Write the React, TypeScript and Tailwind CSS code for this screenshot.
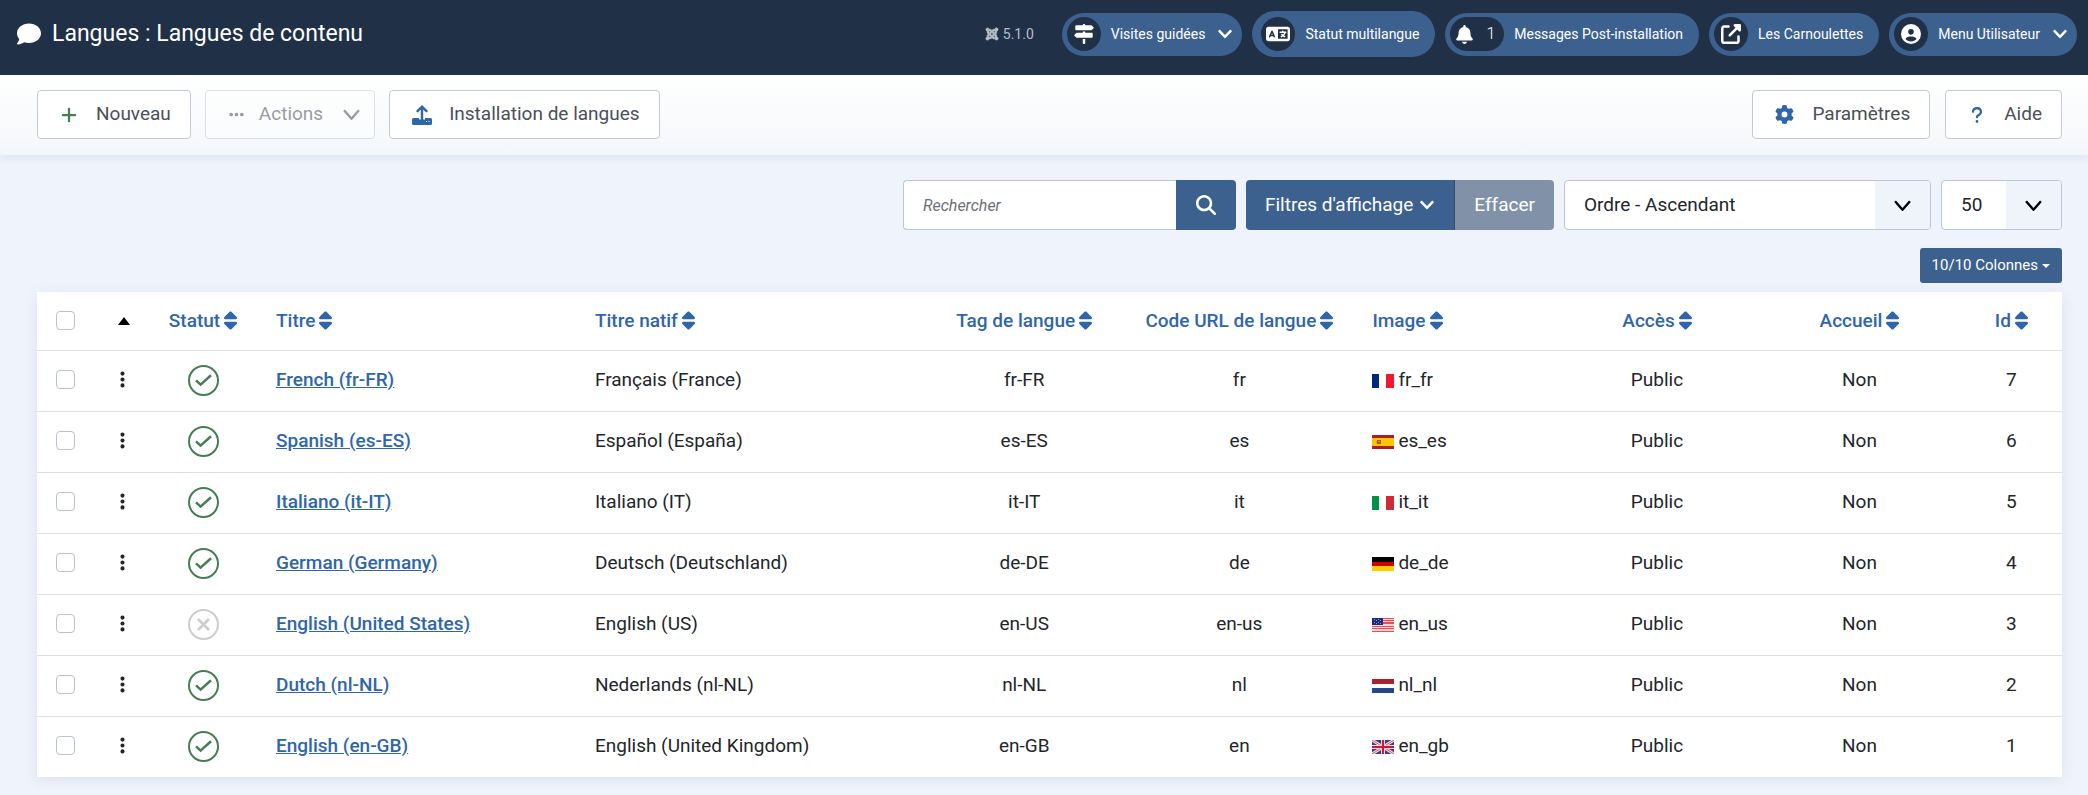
import { ReactNode } from "react";
import { FaChevronDown } from "react-icons/fa";
import {
  FaBell,
  FaCircleUser,
  FaComment,
  FaEllipsis,
  FaEllipsisVertical,
  FaGear,
  FaJoomla,
  FaLanguage,
  FaMagnifyingGlass,
  FaPlus,
  FaQuestion,
  FaSignsPost,
  FaSort,
  FaUpRightFromSquare,
} from "react-icons/fa6";

type Language = {
  id: number;
  title: string;
  native: string;
  tag: string;
  sef: string;
  image: string;
  published: boolean;
};

const languages: Language[] = [
  { id: 7, title: "French (fr-FR)", native: "Français (France)", tag: "fr-FR", sef: "fr", image: "fr_fr", published: true },
  { id: 6, title: "Spanish (es-ES)", native: "Español (España)", tag: "es-ES", sef: "es", image: "es_es", published: true },
  { id: 5, title: "Italiano (it-IT)", native: "Italiano (IT)", tag: "it-IT", sef: "it", image: "it_it", published: true },
  { id: 4, title: "German (Germany)", native: "Deutsch (Deutschland)", tag: "de-DE", sef: "de", image: "de_de", published: true },
  { id: 3, title: "English (United States)", native: "English (US)", tag: "en-US", sef: "en-us", image: "en_us", published: false },
  { id: 2, title: "Dutch (nl-NL)", native: "Nederlands (nl-NL)", tag: "nl-NL", sef: "nl", image: "nl_nl", published: true },
  { id: 1, title: "English (en-GB)", native: "English (United Kingdom)", tag: "en-GB", sef: "en", image: "en_gb", published: true },
];

const flagShapes: Record<string, ReactNode> = {
  fr_fr: (
    <>
      <path fill="#00267f" d="M0 0h7v14H0z" />
      <path fill="#fff" d="M7 0h8v14H7z" />
      <path fill="#f31830" d="M14 0h8v14h-8z" />
    </>
  ),
  es_es: (
    <>
      <path fill="#b01c20" d="M0 0h22v14H0z" />
      <path fill="#ffc400" d="M0 3h22v8H0z" />
      <path fill="#ad5a1e" d="M5 5h4v4H5z" />
      <path fill="#d99a3a" d="M6 6h2v1H6zM4 6h1v2H4z" />
    </>
  ),
  it_it: (
    <>
      <path fill="#fff" d="M0 0h22v14H0z" />
      <path fill="#009246" d="M0 0h7v14H0z" />
      <path fill="#ce2b37" d="M14 0h8v14h-8z" />
    </>
  ),
  de_de: (
    <>
      <path fill="#000" d="M0 0h22v5H0z" />
      <path fill="#d00000" d="M0 5h22v4H0z" />
      <path fill="#ffce00" d="M0 9h22v5H0z" />
    </>
  ),
  en_us: (
    <>
      <path fill="#fbd5d5" d="M0 0h22v14H0z" />
      <path fill="#e8504f" d="M0 0h22v1H0zM0 2h22v1H0zM0 4h22v2H0zM0 8h22v1H0zM0 10h22v1H0zM0 13h22v1H0z" />
      <path fill="#1c2a80" d="M0 0h11v7H0z" />
      <path fill="#8f97c6" d="M2 1h1v1H2zM4 2h1v1H4zM6 1h1v1H6zM8 2h1v1H8zM2 4h1v1H2zM4 5h1v1H4zM6 4h1v1H6zM8 5h1v1H8z" />
    </>
  ),
  nl_nl: (
    <>
      <path fill="#fff" d="M0 0h22v14H0z" />
      <path fill="#a8232f" d="M0 0h22v5H0z" />
      <path fill="#27478c" d="M0 9h22v5H0z" />
    </>
  ),
  en_gb: (
    <>
      <path fill="#35417f" d="M0 0h22v14H0z" />
      <path stroke="#f2dbe2" strokeWidth="3" d="M0 0l22 14M22 0L0 14" />
      <path stroke="#d85a70" strokeWidth="1" d="M0 0l22 14M22 0L0 14" />
      <path fill="#f3d3db" d="M9 0h4v14H9zM0 5h22v4H0z" />
      <path fill="#cc1a35" d="M10 0h2v14h-2zM0 6h22v2H0z" />
    </>
  ),
};

function Flag({ code }: { code: string }) {
  return (
    <svg viewBox="0 0 22 14" className="mt-[2px] h-[14px] w-[22px] shrink-0" aria-hidden="true">
      {flagShapes[code]}
    </svg>
  );
}

function StatusIcon({ published }: { published: boolean }) {
  return published ? (
    <svg viewBox="0 0 31 31" className="size-[31px] text-[#457d54]" fill="none" stroke="currentColor">
      <circle cx="15.5" cy="15.5" r="14.5" strokeWidth="2" />
      <path d="M8 15.3l4.600 4.300L23 10.200" strokeWidth="2.500" />
    </svg>
  ) : (
    <svg viewBox="0 0 31 31" className="size-[31px] text-[#cdcdcd]" fill="none" stroke="currentColor">
      <circle cx="15.5" cy="15.5" r="14.5" strokeWidth="2" />
      <path d="M10 10l11 11M21 10L10 21" strokeWidth="2.800" />
    </svg>
  );
}

function ThinChevron({ className }: { className: string }) {
  return (
    <svg viewBox="0 0 16 10" className={className} fill="none" stroke="currentColor" strokeWidth="2.2" aria-hidden="true">
      <path d="M1 1l7 8 7-8" />
    </svg>
  );
}

function UploadIcon() {
  return (
    <svg viewBox="0 0 20 20" className="size-5 text-[#2f66ab]" aria-hidden="true">
      <path fill="currentColor" d="M1.500 13H7v1.500h6V13h5.500q1.500 0 1.500 1.500v4q0 1.500-1.500 1.500h-17Q0 20 0 18.500v-4Q0 13 1.500 13z" />
      <path fill="none" stroke="currentColor" strokeWidth="2.400" strokeLinecap="round" d="M10 15.500V2M5.500 6.200L10 1.700l4.500 4.500" />
      <path fill="#fff" d="M14 16h1v1h-1zM16.500 16h1v1h-1z" />
    </svg>
  );
}

type PillProps = { icon: ReactNode; label: string; caret?: boolean; tall?: boolean; count?: string };

function Pill({ icon, label, caret = false, tall = false, count }: PillProps) {
  const size = tall ? "h-[46px] pl-[9px] pr-4" : caret ? "h-[43px] pl-[5px] pr-[9px]" : "h-[43px] pl-[5px] pr-4";
  return (
    <button type="button" className={`flex items-center rounded-full bg-[#3d618f] text-sm text-white ${size}`}>
      <span className="flex h-[34px] min-w-[34px] items-center justify-center gap-2 rounded-full bg-[#203047] px-[5px]">
        {icon}
        {count && <span className="pr-1 pl-1 text-base font-light">{count}</span>}
      </span>
      <span className="ml-[10px]">{label}</span>
      {caret && <FaChevronDown className="ml-3 size-4" />}
    </button>
  );
}

const toolButton = "flex h-[49px] items-center rounded-[4px] border border-[#c3cad3] bg-white text-[19px] text-[#495057]";

function SortHeader({ label }: { label: string }) {
  return (
    <a href="#" className="inline-flex items-center gap-1 text-[#2f66ab]">
      {label}
      <FaSort className="h-[21px] w-[13px]" />
    </a>
  );
}

function Box({ label }: { label: string }) {
  return (
    <input
      type="checkbox"
      aria-label={label}
      className="block size-[19px] appearance-none rounded-[4px] border border-[#b9c2ce] bg-white checked:bg-[#3d618f]"
    />
  );
}

function SelectBox({ label, value, className }: { label: string; value: string; className: string }) {
  return (
    <div className={`relative ${className}`}>
      <select
        aria-label={label}
        defaultValue={value}
        className="h-[50px] w-full appearance-none rounded-[4px] border border-[#b9c5d8] bg-white pl-[19px] text-[19px] text-[#22262a]"
      >
        <option>{value}</option>
      </select>
      <span className="pointer-events-none absolute inset-y-px right-px flex w-[55px] items-center justify-center rounded-r-[3px] bg-[#eff4fb]">
        <ThinChevron className="h-[11px] w-[17px] text-black" />
      </span>
    </div>
  );
}

export default function App() {
  return (
    <div className="min-h-screen bg-[#eff3fb] font-['Roboto',sans-serif] text-[#22262a]">
      <header className="flex h-[75px] items-center justify-between bg-[#203047] pr-[11px] pb-[7px] pl-[17px] text-white">
        <h1 className="flex items-center gap-[11px] text-[23px]">
          <FaComment className="size-6" />
          Langues : Langues de contenu
        </h1>
        <div className="flex items-center gap-[10px]">
          <span className="mr-[18px] flex items-center gap-1 text-sm text-[#b5bdc9]">
            <FaJoomla className="size-[14px]" stroke="currentColor" strokeWidth="24" />
            5.1.0
          </span>
          <Pill icon={<FaSignsPost className="size-5" />} label="Visites guidées" caret />
          <Pill icon={<FaLanguage className="size-6" />} label="Statut multilangue" tall />
          <Pill icon={<FaBell className="size-[19px]" />} label="Messages Post-installation" count="1" />
          <Pill icon={<FaUpRightFromSquare className="size-5" />} label="Les Carnoulettes" />
          <Pill icon={<FaCircleUser className="size-5" />} label="Menu Utilisateur" caret />
        </div>
      </header>

      <div className="flex h-20 items-center justify-between bg-linear-to-b from-white to-[#f4f7fa] pr-[26px] pb-px pl-[37px] shadow-[0_5px_5px_#e4eaf4]">
        <div className="flex gap-[14px]">
          <button type="button" className={`${toolButton} gap-[18px] pr-[19px] pl-[22px]`}>
            <FaPlus className="size-[18px] text-[#457d54]" />
            Nouveau
          </button>
          <button type="button" disabled className={`${toolButton} gap-[14px] pr-[14px] pl-[22px] opacity-55`}>
            <FaEllipsis className="size-[17px]" />
            Actions
            <ThinChevron className="ml-[6px] h-[11px] w-[17px]" />
          </button>
          <button type="button" className={`${toolButton} gap-[17px] pr-[19px] pl-[22px]`}>
            <UploadIcon />
            Installation de langues
          </button>
        </div>
        <div className="flex gap-[15px]">
          <button type="button" className={`${toolButton} gap-[18px] pr-[19px] pl-[22px]`}>
            <FaGear className="size-[19px] text-[#2f66ab]" />
            Paramètres
          </button>
          <button type="button" className={`${toolButton} gap-[18px] pr-[19px] pl-[22px]`}>
            <FaQuestion className="size-[18px] text-[#2f66ab]" />
            Aide
          </button>
        </div>
      </div>

      <main className="pt-[25px] pr-[26px] pb-[18px] pl-[37px]">
        <div className="flex justify-end gap-[10px]">
          <form className="flex" role="search">
            <input
              type="text"
              aria-label="Rechercher"
              placeholder="Rechercher"
              className="h-[50px] w-[273px] rounded-l-[4px] border border-r-0 border-[#b9c5d8] bg-white px-[19px] text-base placeholder:text-[#6b7076] placeholder:italic"
            />
            <button type="button" aria-label="Rechercher" className="flex w-[60px] items-center justify-center rounded-r-[4px] bg-[#3d618f] text-white">
              <FaMagnifyingGlass className="size-5" />
            </button>
          </form>
          <div className="flex text-[19px] text-white">
            <button type="button" className="flex items-center gap-[6px] rounded-l-[4px] border-r border-[#2c4c76] bg-[#3d618f] px-[19px]">
              Filtres d'affichage
              <FaChevronDown className="size-4" />
            </button>
            <button type="button" className="rounded-r-[4px] bg-[#8192a8] px-[19px]">
              Effacer
            </button>
          </div>
          <SelectBox label="Trier par" value="Ordre - Ascendant" className="w-[367px]" />
          <SelectBox label="Nombre par page" value="50" className="w-[121px]" />
        </div>

        <div className="mt-[18px] flex justify-end">
          <button type="button" className="flex h-[35px] items-center gap-1 rounded-[3px] bg-[#3d618f] px-3 text-[15px] text-white">
            10/10 Colonnes
            <span className="border-x-4 border-t-4 border-x-transparent border-t-white" />
          </button>
        </div>

        <table className="mt-[9px] w-full table-fixed border-collapse bg-white text-[19px] leading-6 shadow-[0_3px_12px_#dbe1ec]">
          <colgroup>
            <col className="w-[67px]" />
            <col className="w-[36px]" />
            <col className="w-[126px]" />
            <col className="w-[15.75%]" />
            <col />
            <col className="w-[9.1%]" />
            <col className="w-[12.15%]" />
            <col className="w-[9.55%]" />
            <col className="w-[10%]" />
            <col className="w-[10%]" />
            <col className="w-[5%]" />
          </colgroup>
          <thead>
            <tr className="h-[58px] border-b border-[#dcdfe3] [&>th]:font-medium">
              <th className="pl-[19px]">
                <Box label="Tout cocher" />
              </th>
              <th>
                <a href="#" aria-label="Trier par ordre" className="flex justify-center pl-1">
                  <span className="border-x-[6px] border-b-[8px] border-x-transparent border-b-black" />
                </a>
              </th>
              <th><SortHeader label="Statut" /></th>
              <th className="pl-[10px] text-left"><SortHeader label="Titre" /></th>
              <th className="pl-[10px] text-left"><SortHeader label="Titre natif" /></th>
              <th><SortHeader label="Tag de langue" /></th>
              <th><SortHeader label="Code URL de langue" /></th>
              <th className="pl-[10px] text-left"><SortHeader label="Image" /></th>
              <th><SortHeader label="Accès" /></th>
              <th><SortHeader label="Accueil" /></th>
              <th><SortHeader label="Id" /></th>
            </tr>
          </thead>
          <tbody>
            {languages.map((lang) => (
              <tr key={lang.id} className="h-[61px] border-b border-[#dcdfe3] text-center last:border-b-0 [&>td]:pb-[2px]">
                <td className="pl-[19px]">
                  <Box label={lang.title} />
                </td>
                <td>
                  <FaEllipsisVertical className="mx-auto size-[19px] text-[#22262a]" />
                </td>
                <td>
                  <button type="button" aria-label={lang.published ? "Dépublier" : "Publier"} className="flex w-full justify-center pt-[2px]">
                    <StatusIcon published={lang.published} />
                  </button>
                </td>
                <td className="pl-[10px] text-left font-medium">
                  <a href="#" className="text-[#2f66ab] underline">{lang.title}</a>
                </td>
                <td className="pl-[10px] text-left">{lang.native}</td>
                <td>{lang.tag}</td>
                <td>{lang.sef}</td>
                <td className="pl-[10px]">
                  <span className="flex items-center gap-1">
                    <Flag code={lang.image} />
                    {lang.image}
                  </span>
                </td>
                <td>Public</td>
                <td>Non</td>
                <td>{lang.id}</td>
              </tr>
            ))}
          </tbody>
        </table>
      </main>
    </div>
  );
}
